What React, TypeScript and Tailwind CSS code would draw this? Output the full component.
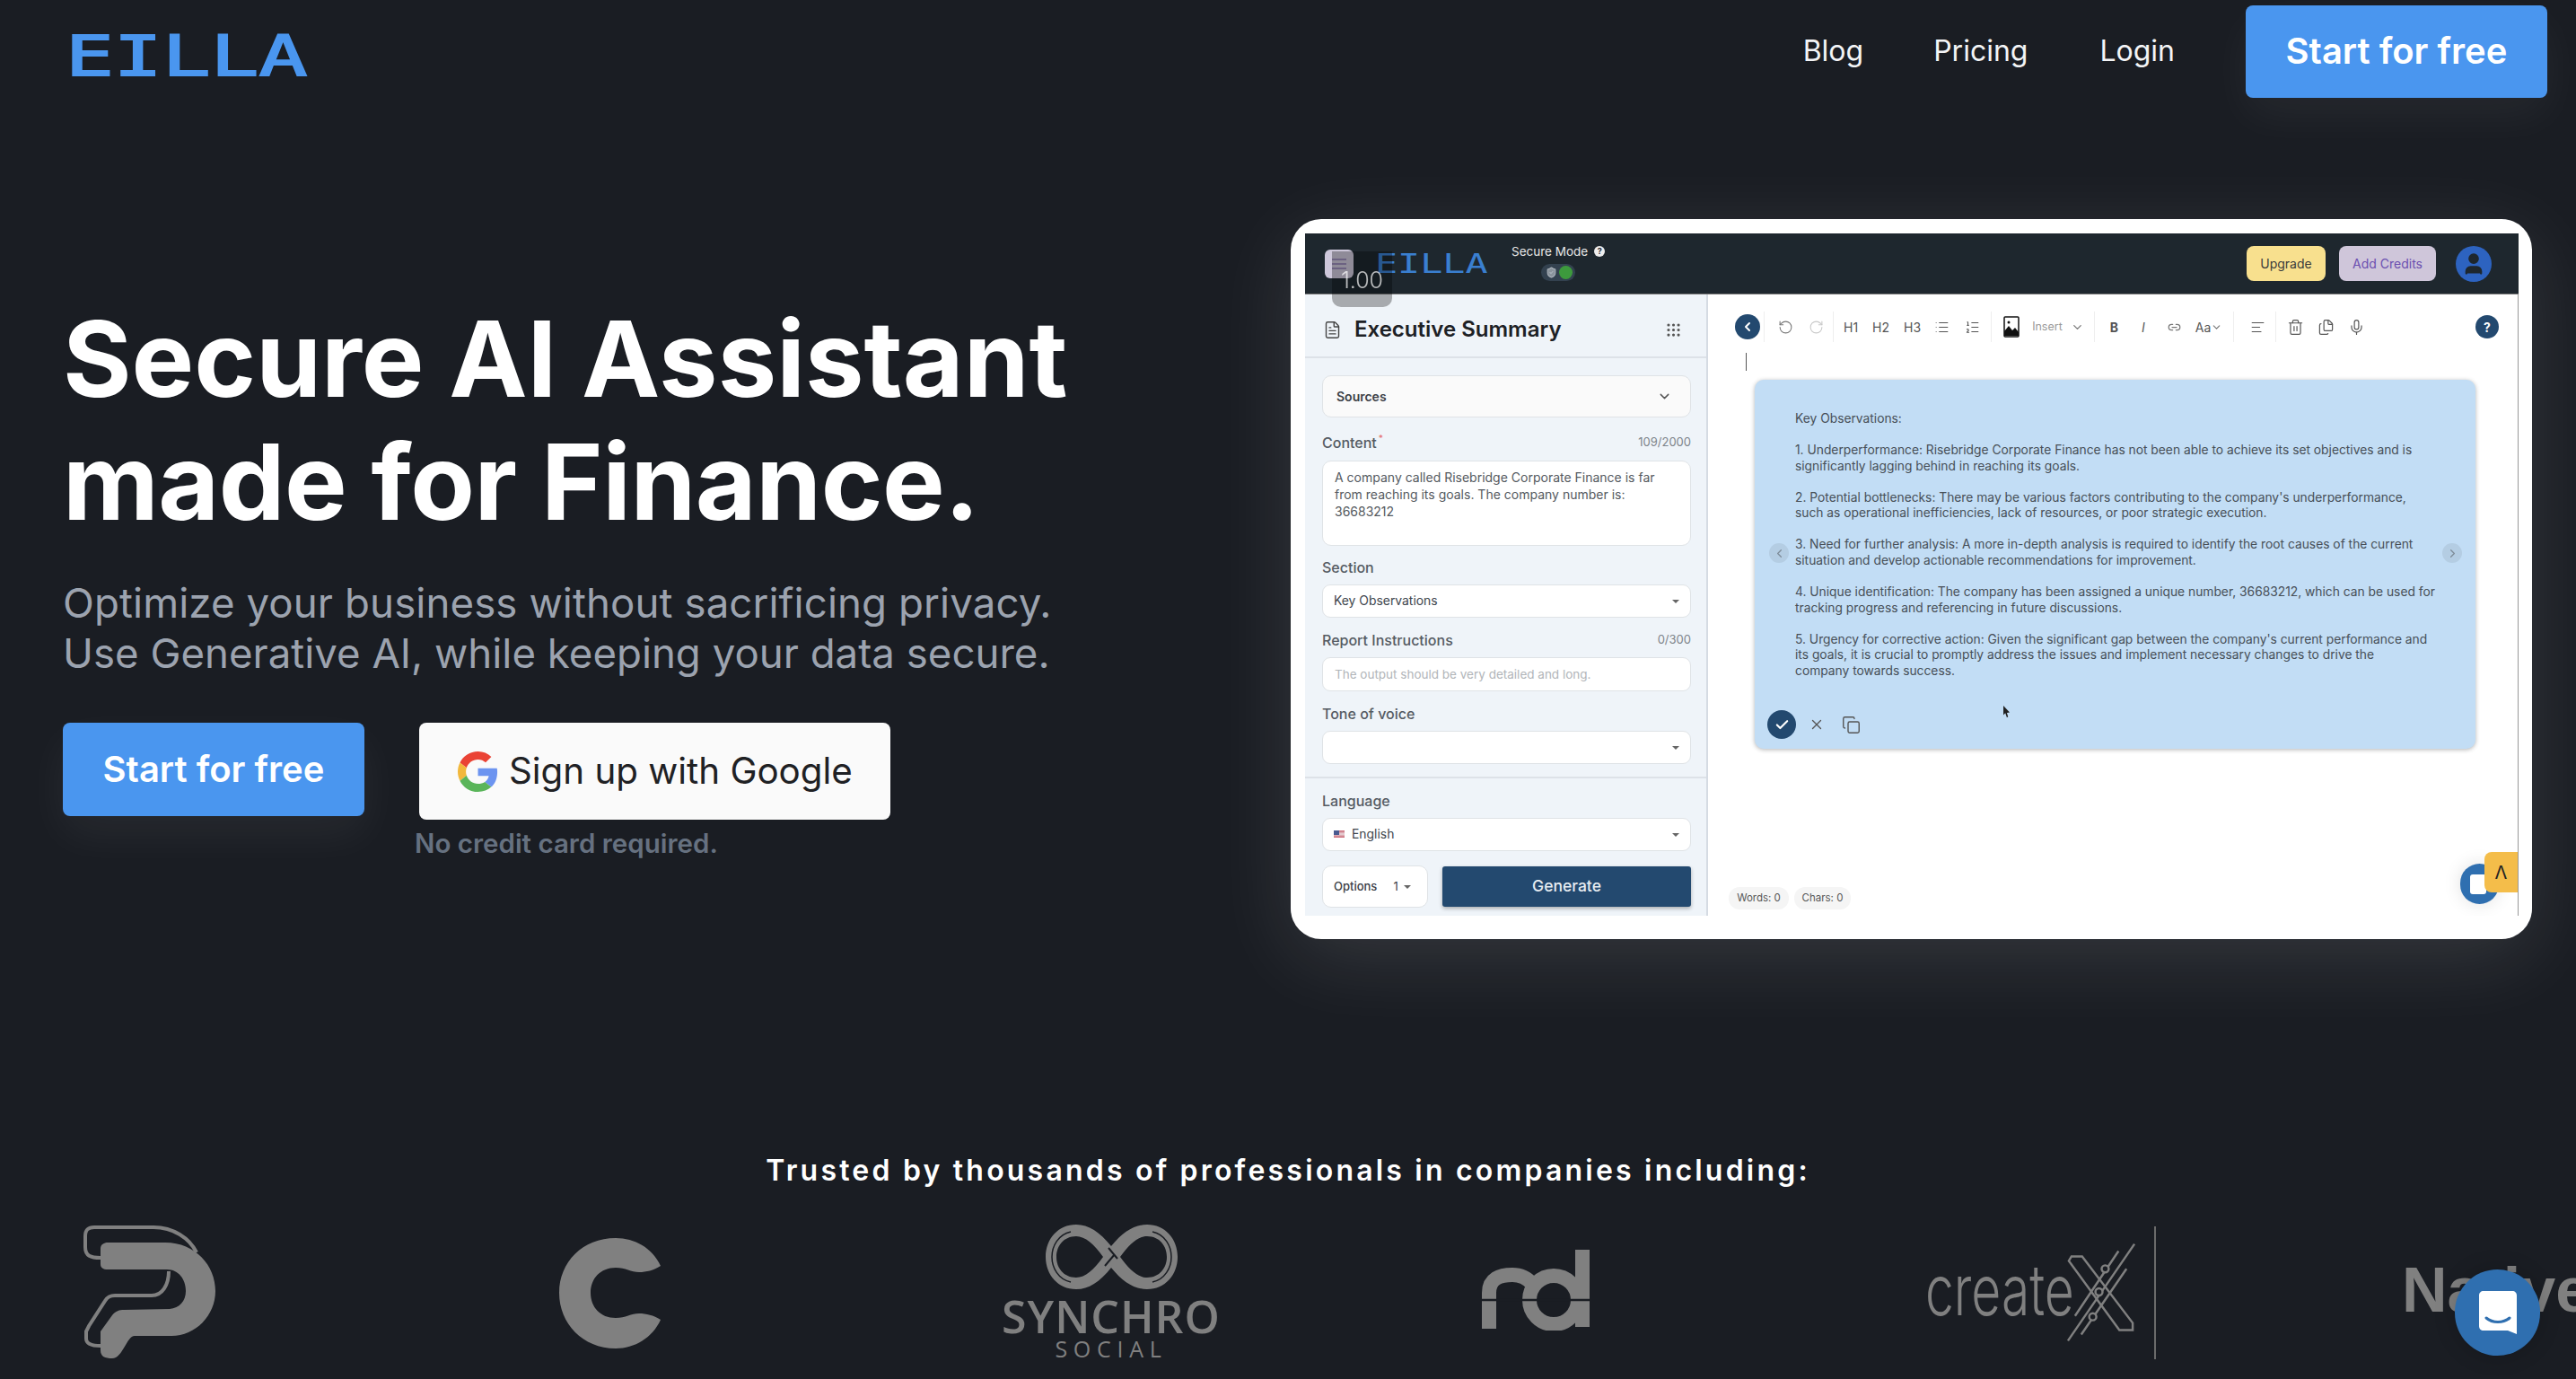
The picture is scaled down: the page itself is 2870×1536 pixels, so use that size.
import { AlignLeft, Check, ChevronDown, ChevronLeft, ChevronRight, Copy, FileText, Files, Grip, Link2, List, ListOrdered, Mic, RotateCcw, RotateCw, ShieldCheck, Trash2, User, X } from "lucide-react";

function Logo() {
  return (
    <div className="w-[264px] h-[78px] pt-[2px] overflow-visible">
      <span className="block origin-left scale-x-[1.42] text-[63px] leading-[76px] text-[#4a96ef] [-webkit-text-stroke:1.8px_#4a96ef] whitespace-nowrap font-['DejaVu_Sans_Mono',monospace]">EILLA</span>
    </div>
  );
}

function GoogleIcon() {
  return (
    <svg viewBox="0 0 48 48" className="w-[45px] h-[45px] shrink-0">
      <path fill="#EA4335" d="M24 9.5c3.5 0 6.6 1.2 9.1 3.6l6.8-6.8C35.8 2.4 30.3 0 24 0 14.6 0 6.5 5.4 2.6 13.2l7.9 6.2C12.4 13.6 17.7 9.5 24 9.5z" />
      <path fill="#6C94F0" d="M47 24.5c0-1.6-.1-3.1-.4-4.5H24v9h12.9c-.6 3-2.2 5.500-4.800 7.200l7.700 6C44.300 38.500 47 32.100 47 24.500z" />
      <path fill="#F2B83C" d="M10.500 28.600c-.5-1.400-.8-3-.8-4.600s.3-3.200.8-4.600l-7.900-6.200C.9 16.500 0 20.100 0 24s.9 7.500 2.600 10.800l7.900-6.200z" />
      <path fill="#5AB55A" d="M24 48c6.500 0 11.900-2.100 15.800-5.800l-7.700-6c-2.100 1.400-4.900 2.300-8.100 2.300-6.300 0-11.600-4.100-13.500-9.900l-7.900 6.200C6.500 42.600 14.600 48 24 48z" />
    </svg>
  );
}

function Field({ label, right, req }: { label: string; right?: string; req?: boolean }) {
  return (
    <div className="flex justify-between items-center h-[20px]">
      <span className="text-[16px] font-medium text-[#555b63]">{label}{req && <span className="text-[#e57373] text-[10px] align-top ml-[2px]">*</span>}</span>
      {right && <span className="text-[13px] text-[#7d838a]">{right}</span>}
    </div>
  );
}

function Select({ children }: { children?: React.ReactNode }) {
  return (
    <div className="h-[37px] flex items-center justify-between bg-white border border-[#dfe3e6] rounded-[9px] pl-[12px] pr-[12px] text-[13.900px] text-[#40464d]">
      <span className="flex items-center gap-[8px]">{children}</span>
      <span className="w-0 h-0 border-x-[4px] border-x-transparent border-t-[4px] border-t-[#666]" />
    </div>
  );
}

function LeftPanel() {
  return (
    <div className="w-[449px] shrink-0 bg-[#eff4f9] border-r-2 border-[#d5dbe3] flex flex-col">
      <div className="h-[71px] border-b-2 border-[#dde2e8] flex items-center pl-[20px] pr-[27px] pt-[9px]">
        <FileText className="w-[21px] h-[21px] text-[#444]" strokeWidth={1.6} />
        <span className="ml-[14px] text-[24px] font-semibold text-[#1d2125] flex-1">Executive Summary</span>
        <Grip className="w-[19px] h-[19px] text-[#555]" />
      </div>
      <div className="pl-[19px] pr-[17px] pt-[19px] flex flex-col flex-1">
        <div className="h-[47px] flex items-center justify-between bg-[#fafafa] border border-[#dfe3e6] rounded-[10px] pl-[15px] pr-[20px] text-[14px] font-semibold text-[#3b4046]">
          Sources
          <ChevronDown className="w-[17px] h-[17px] text-[#555]" />
        </div>
        <div className="mt-[18px]"><Field label="Content" right="109/2000" req /></div>
        <div className="mt-[10px] h-[95px] bg-white border border-[#dfe3e6] rounded-[10px] px-[13px] pt-[8px] text-[14px] leading-[19px] text-[#555a60] whitespace-nowrap">
          A company called Risebridge Corporate Finance is far<br />from reaching its goals. The company number is:<br />36683212
        </div>
        <div className="mt-[14px]"><Field label="Section" /></div>
        <div className="mt-[9px]"><Select>Key Observations</Select></div>
        <div className="mt-[15px]"><Field label="Report Instructions" right="0/300" /></div>
        <div className="mt-[9px] h-[38px] flex items-center bg-white border border-[#dfe3e6] rounded-[9px] px-[13px] text-[13.500px] text-[#b1b5b9]">The output should be very detailed and long.</div>
        <div className="mt-[15px]"><Field label="Tone of voice" /></div>
        <div className="mt-[9px]"><Select /></div>
      </div>
      <div className="border-t-2 border-[#dde2e8] pl-[19px] pr-[17px] pt-[15px] pb-[9px] flex flex-col">
        <Field label="Language" />
        <div className="mt-[9px]">
          <Select>
            <span className="w-[12px] h-[8px] bg-[linear-gradient(#c8606e,#e8d8dc_50%,#c8606e)] relative"><span className="absolute left-0 top-0 w-[6px] h-[5px] bg-[#4a5a90]" /></span>
            English
          </Select>
        </div>
        <div className="mt-[16px] flex items-center justify-between">
          <div className="w-[118px] h-[47px] flex items-center bg-white border border-[#dfe3e6] rounded-[10px] pl-[12px] text-[13px] font-medium text-[#3b4046]">
            Options<span className="ml-[18px] font-normal">1</span>
            <span className="ml-[6px] w-0 h-0 border-x-[4px] border-x-transparent border-t-[4px] border-t-[#666]" />
          </div>
          <div className="w-[277px] h-[45px] flex items-center justify-center rounded-[3px] bg-[#23496f] text-[17.500px] font-medium text-[#e8edf2] shadow-[0_2px_4px_rgba(0,0,0,0.3)]">Generate</div>
        </div>
      </div>
    </div>
  );
}

function Sep() {
  return <span className="block w-px h-[34px] bg-[#eeeeee]" />;
}

function Toolbar() {
  const ic = "w-[17px] h-[17px]";
  return (
    <div className="flex items-center h-[44px] pl-[30px] pr-[21px] text-[#555] text-[14px]">
      <span className="w-[28px] h-[28px] rounded-full bg-[#23496f] flex items-center justify-center"><ChevronLeft className="w-[16px] h-[16px] text-white" strokeWidth={3} /></span>
      <span className="ml-[4px]"><Sep /></span>
      <RotateCcw className={`${ic} ml-[15px] text-[#777]`} strokeWidth={1.5} />
      <RotateCw className={`${ic} ml-[17px] text-[#c8c8c8]`} strokeWidth={1.5} />
      <span className="ml-[10px]"><Sep /></span>
      <span className="ml-[11px]">H1</span>
      <span className="ml-[16px]">H2</span>
      <span className="ml-[16px]">H3</span>
      <List className={`${ic} ml-[15px]`} strokeWidth={1.5} />
      <ListOrdered className={`${ic} ml-[17px]`} strokeWidth={1.5} />
      <span className="ml-[12px]"><Sep /></span>
      <svg viewBox="0 0 18 24" className="w-[18px] h-[26px] ml-[13px]">
        <rect x="1" y="1" width="16" height="22" rx="1" fill="#fff" stroke="#111" strokeWidth="1.500" />
        <circle cx="6" cy="7" r="1.500" fill="#111" />
        <path fill="#111" d="M1 22 L1 17 L6 11 L10 16 L13 13 L17 18 L17 22 Z" />
      </svg>
      <span className="ml-[14px] text-[12.500px] text-[#999]">Insert</span>
      <ChevronDown className="w-[15px] h-[15px] ml-[9px] text-[#777]" />
      <span className="ml-[11px]"><Sep /></span>
      <span className="ml-[17px] text-[14px] font-bold">B</span>
      <span className="ml-[26px] text-[14px] italic">I</span>
      <Link2 className="w-[15px] h-[15px] ml-[25px] text-[#777]" />
      <span className="ml-[16px] text-[14px]">Aa</span>
      <ChevronDown className="w-[13px] h-[13px] text-[#777]" />
      <span className="ml-[12px]"><Sep /></span>
      <AlignLeft className={`${ic} ml-[18px]`} strokeWidth={1.5} />
      <span className="ml-[11px]"><Sep /></span>
      <Trash2 className="w-[19px] h-[21px] ml-[12px]" strokeWidth={1.5} />
      <Files className="w-[19px] h-[21px] ml-[15px]" strokeWidth={1.5} />
      <Mic className="w-[19px] h-[21px] ml-[15px]" strokeWidth={1.5} />
      <span className="ml-auto w-[26px] h-[26px] rounded-full bg-[#23496f] flex items-center justify-center text-white text-[14px] font-bold">?</span>
    </div>
  );
}

const notes = [
  ["1. Underperformance: Risebridge Corporate Finance has not been able to achieve its set objectives and is", "significantly lagging behind in reaching its goals."],
  ["2. Potential bottlenecks: There may be various factors contributing to the company's underperformance,", "such as operational inefficiencies, lack of resources, or poor strategic execution."],
  ["3. Need for further analysis: A more in-depth analysis is required to identify the root causes of the current", "situation and develop actionable recommendations for improvement."],
  ["4. Unique identification: The company has been assigned a unique number, 36683212, which can be used for", "tracking progress and referencing in future discussions."],
  ["5. Urgency for corrective action: Given the significant gap between the company's current performance and", "its goals, it is crucial to promptly address the issues and implement necessary changes to drive the", "company towards success."],
];

function Editor() {
  return (
    <div className="relative flex-1 bg-white border-r border-[#9a9a9a] pt-[14px]">
      <Toolbar />
      <div className="ml-[42px] mt-[7px] w-px h-[20px] bg-[#555]" />
      <div className="relative ml-[52px] mt-[10px] w-[803px] h-[411px] rounded-[10px] bg-[#c2ddf5] shadow-[0_1px_5px_rgba(0,0,0,0.3)] pl-[45px] pt-[35px] text-[13.800px] leading-[17.600px] text-[#474f57] whitespace-nowrap">
        <p>Key Observations:</p>
        {notes.map((lines) => (
          <p key={lines[0]} className="mt-[17.500px]">
            {lines.map((l) => <span key={l} className="block">{l}</span>)}
          </p>
        ))}
        <span className="absolute left-[16px] top-[182px] w-[22px] h-[22px] rounded-full bg-[#b4cde3] flex items-center justify-center"><ChevronLeft className="w-[15px] h-[15px] text-[#7d8b98]" /></span>
        <span className="absolute right-[15px] top-[182px] w-[22px] h-[22px] rounded-full bg-[#b4cde3] flex items-center justify-center"><ChevronRight className="w-[15px] h-[15px] text-[#7d8b98]" /></span>
        <div className="absolute left-[14px] bottom-[11px] flex items-center">
          <span className="w-[32px] h-[32px] rounded-full bg-[#23496f] flex items-center justify-center"><Check className="w-[17px] h-[17px] text-white" strokeWidth={3} /></span>
          <X className="ml-[14px] w-[18px] h-[18px] text-[#555]" strokeWidth={1.8} />
          <Copy className="ml-[19px] w-[21px] h-[21px] text-[#555]" strokeWidth={1.6} />
        </div>
        <svg viewBox="0 0 10 16" className="absolute left-[276px] top-[363px] w-[9px] h-[14px]"><path d="M1 0 L1 12 L3.500 9.500 L5.500 15 L7 14 L5.500 9 L9 8.500 Z" fill="#222" /></svg>
      </div>
      <div className="absolute left-[23px] bottom-[7px] flex gap-[6px] text-[11.500px] text-[#555]">
        <span className="h-[25px] w-[67px] rounded-[12px] bg-[#f5f5f5] flex items-center justify-center">Words: 0</span>
        <span className="h-[25px] w-[63px] rounded-[12px] bg-[#f5f5f5] flex items-center justify-center">Chars: 0</span>
      </div>
      <span className="absolute right-[21px] bottom-[13px] w-[43px] h-[45px] rounded-full bg-[#2f6fb0] shadow-[0_0_20px_rgba(0,0,0,0.12)] flex items-center pl-[11px]"><span className="w-[18px] h-[22px] rounded-[3px] bg-white" /></span>
      <span className="absolute right-0 bottom-[26px] w-[37px] h-[45px] rounded-l-[8px] bg-[#f4bd4a] flex items-center justify-center text-[20px] leading-none text-[#222]">Λ</span>
    </div>
  );
}

function ProductShot() {
  return (
    <div className="w-[1383px] h-[802px] shrink-0 bg-white rounded-[34px] pl-[16px] pr-[15px] pt-[16px] pb-[26px] shadow-[0_20px_90px_rgba(255,255,255,0.12)]">
      <div className="relative h-full flex flex-col overflow-hidden font-['Inter',sans-serif] blur-[0.5px]">
        <div className="h-[68px] shrink-0 bg-[#1e272e] border-b border-[#777] flex items-center pl-[22px] pr-[30px]">
          <span className="w-[32px] h-[32px] rounded-[6px] bg-[#cdc7da] flex flex-col justify-center gap-[3px] px-[8px]">
            <span className="h-[2px] bg-[#9b8dbb]" /><span className="h-[2px] bg-[#9b8dbb]" /><span className="h-[2px] bg-[#9b8dbb]" />
          </span>
          <div className="ml-[24px] w-[128px] overflow-visible">
            <span className="block origin-left scale-x-[1.39] text-[30px] leading-[30px] text-[#3a7fd0] whitespace-nowrap font-['DejaVu_Sans_Mono',monospace]">EILLA</span>
          </div>
          <div className="ml-[24px] w-[110px] flex flex-col items-start -mt-[3px]">
            <span className="flex items-center text-[13.500px] leading-[18px] text-[#e8e8e8] whitespace-nowrap">Secure Mode<span className="ml-[7px] w-[12px] h-[12px] rounded-full bg-[#eee] text-[#1e272e] text-[9px] font-bold flex items-center justify-center">?</span></span>
            <span className="ml-[33px] mt-[5px] w-[38px] h-[19px] rounded-full bg-[#33414f] flex items-center justify-between pl-[5px] pr-[3px]">
              <ShieldCheck className="w-[13px] h-[13px] text-[#aab2ba]" fill="#8a939c" />
              <span className="w-[15px] h-[15px] rounded-full bg-[#3d9a3d]" />
            </span>
          </div>
          <span className="ml-auto w-[88px] h-[39px] rounded-[8px] bg-[#f8e08e] flex items-center justify-center text-[14px] text-[#3b3b3b]">Upgrade</span>
          <span className="ml-[15px] w-[108px] h-[39px] rounded-[8px] bg-[#cfc6da] flex items-center justify-center text-[14px] text-[#6b4fb0]">Add Credits</span>
          <span className="ml-[22px] w-[40px] h-[40px] rounded-full bg-[#2d63c0] flex items-center justify-center"><User className="w-[28px] h-[28px] text-[#1e272e]" fill="#1e272e" /></span>
        </div>
        <div className="flex-1 flex min-h-0">
          <LeftPanel />
          <Editor />
        </div>
        <div className="absolute left-[30px] top-[20px] w-[67px] h-[62px] rounded-b-[10px] bg-black/30 flex items-end justify-center pb-[17px] text-[25px] leading-none font-light text-white/70">1.00</div>
      </div>
    </div>
  );
}

function PLogo() {
  return (
    <svg viewBox="0 0 148 150" className="w-[148px] h-[150px] shrink-0">
      <path fill="#808080" d="M19 26 C19 21 23 19 27 19 L91 19 C125 19 147 45 147 73 C147 100 125 123 98 123 L57 123 C48 123 44 148 32 148 C24 148 19 146 19 139 L19 118 L32 100 C36 95 40 94 45 94 L96 93 C107 92 114 84 114 73 C114 60 106 49 93 49 L27 49 C22 49 19 47 19 43 Z" />
      <path fill="none" stroke="#808080" strokeWidth="4" d="M19 36 C8 36 2 34 2 24 L2 12 C2 4 6 2 12 2 L78 2 C100 2 118 14 126 30 M95 51 C95 66 88 78 76 78 L35 78 C30 78 27 79 24 84 L6 112 L3 118 L3 126 C3 132 10 134 19 134" />
    </svg>
  );
}

function CLogo() {
  return (
    <svg viewBox="0 0 113 124" className="ml-[382px] w-[113px] h-[124px] shrink-0">
      <path fill="#808080" d="M113 32 C104 12 84 1 63 1 C26 1 0 28 0 62 C0 96 26 124 63 124 C84 124 104 112 113 92 C105 87 97 85 89 85 C80 85 74 90 63 90 C46 90 35 78 35 62 C35 46 46 34 63 34 C74 34 80 39 89 39 C97 39 105 37 113 32 Z" />
    </svg>
  );
}

function SynchroLogo() {
  return (
    <div className="ml-[382px] w-[240px] shrink-0 flex flex-col items-center font-['Open_Sans',sans-serif] text-[#808080]">
      <svg viewBox="0 0 147 72" className="w-[147px] h-[72px]" fill="none">
        <path fill="#808080" fillRule="evenodd" d="M73 24 C60 8 48 0 34 0 C14 0 0 16 0 36 C0 56 14 72 34 72 C48 72 60 64 73 48 C86 64 99 72 113 72 C133 72 147 56 147 36 C147 16 133 0 113 0 C99 0 86 8 73 24 Z M34 13 C20 13 12 24 12 36 C12 48 20 59 34 59 C44 59 54 50 64 36 C54 22 44 13 34 13 Z M113 13 C103 13 93 22 83 36 C93 50 103 59 113 59 C127 59 135 48 135 36 C135 24 127 13 113 13 Z" />
        <path stroke="#1a1d23" strokeWidth="1.500" d="M28 8 C14 11 7 24 7 36 C7 48 14 61 28 64 M119 8 C133 11 140 24 140 36 C140 48 133 61 119 64" />
        <path stroke="#1a1d23" strokeWidth="2" d="M66 46 L77 33 M70 26 L80 38" />
      </svg>
      <span className="mt-[9px] text-[50px] leading-[42px] font-semibold tracking-[0.02em] whitespace-nowrap">SYNCHRO</span>
      <span className="mt-[3px] text-[25px] leading-[25px] tracking-[0.27em] whitespace-nowrap">SOCIAL</span>
    </div>
  );
}

function NdLogo() {
  return (
    <svg viewBox="0 0 120 90" className="ml-[293px] -mt-[6px] w-[120px] h-[90px] shrink-0" fill="none">
      <path stroke="#808080" strokeWidth="16" d="M8 88 L8 48 C8 32 20 28 34 28 C42 28 50 31 56 38" />
      <circle cx="80" cy="56" r="27" stroke="#808080" strokeWidth="16" />
      <path stroke="#808080" strokeWidth="16" d="M112 0 L112 86" />
      <path stroke="#1a1d23" strokeWidth="2.500" d="M0 56 L120 56" />
    </svg>
  );
}

function CreateXLogo() {
  return (
    <div className="ml-[374px] w-[257px] shrink-0 flex items-center">
      <div className="w-[155px] h-[60px] mt-[2px]">
        <span className="block origin-left scale-x-[0.73] text-[78px] leading-[52px] font-light text-[#808080] whitespace-nowrap">create</span>
      </div>
      <svg viewBox="0 0 82 112" className="w-[82px] h-[112px]" fill="none" stroke="#808080" strokeWidth="2.500">
        <path d="M79 1 L4 110 M70 29 L19 103 M61 9 L12 82" />
        <path d="M8 15 L20 15 L77 90 L77 98 L62 98 L5 20 Z" />
        <circle cx="46" cy="29" r="4" fill="#1a1d23" />
        <circle cx="39" cy="55" r="4" fill="#1a1d23" />
        <circle cx="32" cy="83" r="4" fill="#1a1d23" />
      </svg>
      <span className="ml-[19px] w-[2px] h-[148px] bg-[#6b6b6b]" />
    </div>
  );
}

export default function App() {
  return (
    <div className="relative w-full h-[1536px] overflow-hidden bg-[#1a1d23] font-['Inter',sans-serif] text-white">
      <header className="h-[108px] flex justify-between pl-[73px] pr-[32px] pt-[6px]">
        <div className="pt-[17px]"><Logo /></div>
        <nav className="flex items-center h-[102px] text-[32px] text-[#f3f4f6]">
          <a className="mr-[78px]">Blog</a>
          <a className="mr-[80px]">Pricing</a>
          <a className="mr-[79px]">Login</a>
          <a className="w-[336px] h-[103px] rounded-[8px] bg-[#4a96ef] flex items-center justify-center text-[40px] font-semibold text-white shadow-[0_20px_50px_rgba(255,255,255,0.05)]">Start for free</a>
        </nav>
      </header>

      <section className="mt-[136px] flex pl-[70px]">
        <div className="w-[1368px] shrink-0 pt-[87px]">
          <h1 className="text-[117px] leading-[137px] font-bold text-white">Secure AI Assistant<br /><span className="tracking-[-0.45px]">made for Finance.</span></h1>
          <p className="mt-[39px] text-[45.600px] leading-[56px] text-[#9ca3af]"><span className="tracking-[0.1px]">Optimize your business without sacrificing privacy.</span><br />Use Generative AI, while keeping your data secure.</p>
          <div className="mt-[49px] flex items-start gap-[61px]">
            <a className="w-[336px] h-[104px] rounded-[8px] bg-[#4a96ef] flex items-center justify-center text-[40px] font-semibold text-white shadow-[0_20px_50px_rgba(255,255,255,0.06)]">Start for free</a>
            <div>
              <a className="w-[525px] h-[108px] rounded-[8px] bg-[#fafafa] flex items-center pl-[43px] gap-[12px] text-[40.300px] text-[#1f2124]">
                <GoogleIcon />
                Sign up with Google
              </a>
              <p className="-ml-[5px] mt-[8px] text-[29.500px] leading-[36px] font-semibold text-[#667180]">No credit card required.</p>
            </div>
          </div>
        </div>
        <ProductShot />
      </section>

      <p className="mt-[238px] text-center text-[32px] leading-[40px] font-semibold tracking-[0.1em] text-white">Trusted by thousands of professionals in companies including:</p>

      <div className="mt-[40px] flex items-center pl-[93px] w-[3200px]">
        <PLogo />
        <CLogo />
        <SynchroLogo />
        <NdLogo />
        <CreateXLogo />
        <span className="ml-[274px] -mt-[6px] text-[70px] leading-none font-bold text-[#808080] font-['Liberation_Sans',sans-serif]">Native</span>
      </div>

      <div className="absolute left-[2735px] top-[1414px] w-[95px] h-[96px] rounded-full bg-[#2f6fb0] shadow-[0_0_24px_rgba(0,0,0,0.2)] flex items-center justify-center">
        <svg viewBox="0 0 42 48" className="w-[42px] h-[48px]">
          <path fill="#fff" d="M5 0 L37 0 C40 0 42 2 42 5 L42 48 L32 44 L5 44 C2 44 0 42 0 39 L0 5 C0 2 2 0 5 0 Z" />
          <path fill="none" stroke="#2f6fb0" strokeWidth="3" strokeLinecap="round" d="M8 30 C15 36 27 36 34 30" />
        </svg>
      </div>
    </div>
  );
}
